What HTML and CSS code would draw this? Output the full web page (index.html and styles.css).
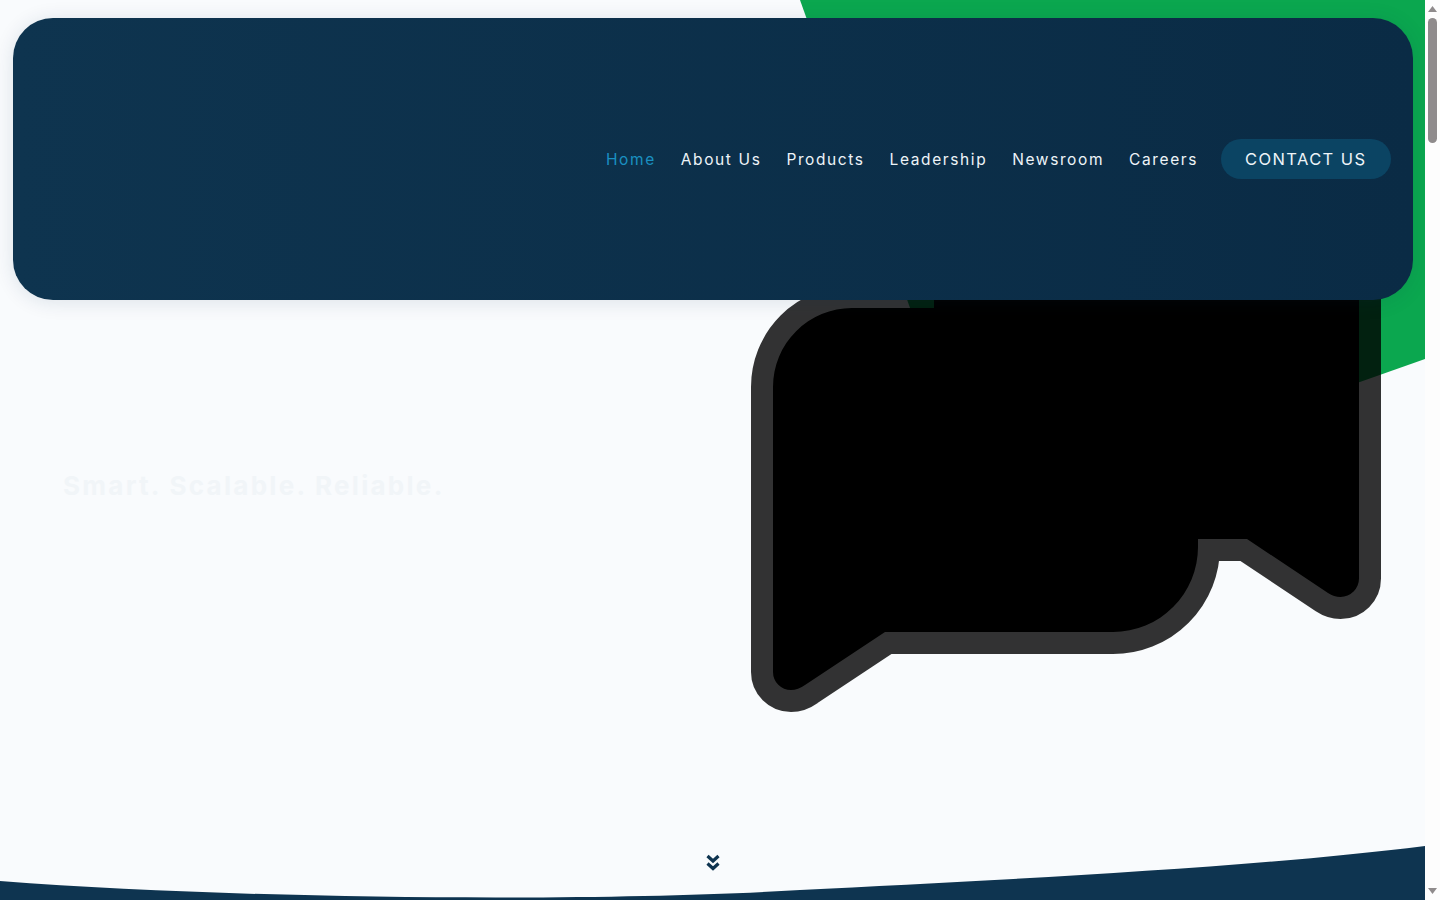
FILE: index.html
```html
<!DOCTYPE html>
<html>
<head>
	<title>Home</title>
	<meta charset="utf-8">
	<link rel="stylesheet" href="styles.css">
</head>
<body>
	<section class="hero">
		<svg class="hero_art" width="1425" height="900" viewBox="0 0 1425 900">
			<polygon class="art_green" points="800,0 1425,0 1425,359 984,515"/>
			<path class="art_bubble" d="M852 308 H1359 V578.5 A18.5 18.5 0 0 1 1340.5 597 Q1334 597 1328 593 L1247 539 H1198 V547 A85 85 0 0 1 1113 632 H885 L805 685 Q798 690 791 690 A18 18 0 0 1 773 672 V387 A79 79 0 0 1 852 308 Z"/>
			<rect x="934" y="286" width="425" height="22"/>
			<path class="art_curve" d="M0 881 C250 900 600 902 800 890 C1000 880 1250 868 1425 846 V900 H0 Z"/>
		</svg>

		<div class="topbar">
			<nav class="menu">
				<a class="menu_item menu_active" href="#">Home</a>
				<a class="menu_item" href="#">About Us</a>
				<a class="menu_item" href="#">Products</a>
				<a class="menu_item" href="#">Leadership</a>
				<a class="menu_item" href="#">Newsroom</a>
				<a class="menu_item" href="#">Careers</a>
			</nav>
			<a class="contact_btn" href="#">CONTACT US</a>
		</div>

		<div class="hero_text">
			<h1 class="tagline">Smart. Scalable. Reliable.</h1>
		</div>

		<div class="scroll_hint">
			<svg width="16" height="18" viewBox="0 0 16 18"><path d="M2.5 3 L8 8 L13.5 3 M2.5 10.5 L8 15.5 L13.5 10.5"/></svg>
		</div>
	</section>

	<!-- page scrollbar, the frame does not draw one itself -->
	<div class="scrollbar">
		<svg width="9" height="6" viewBox="0 0 9 6"><polygon points="4.5,0 9,6 0,6"/></svg>
		<div class="scrollbar_thumb"></div>
		<svg class="scrollbar_down" width="9" height="6" viewBox="0 0 9 6"><polygon points="0,0 9,0 4.5,6"/></svg>
	</div>
</body>
</html>
```

FILE: styles.css
```css
html, body {
	margin: 0;
	padding: 0;
	height: 900px;
	overflow: hidden;
	background-color: #F9FBFD;
}

body {
	display: flex;
	font-family: "Inter", "Liberation Sans", sans-serif;
}

.hero {
	position: relative;
	flex: 0 0 1425px;
	height: 900px;
	overflow: hidden;
	display: flex;
	flex-direction: column;
}

.hero_art {
	position: absolute;
	left: 0;
	top: 0;
}

.art_green {
	fill: #0BA74F;
}

.art_bubble {
	fill: #000000;
	stroke: #000000;
	stroke-opacity: 0.8;
	stroke-width: 44;
	stroke-miterlimit: 10;
}

.art_curve {
	fill: #0E3450;
}

.topbar {
	position: relative;
	box-sizing: border-box;
	width: 1400px;
	height: 282px;
	margin: 18px 0 0 13px;
	padding-right: 22px;
	border-radius: 40px;
	background: linear-gradient(90deg, #0E344F, #0A2B45);
	box-shadow: 0 2px 20px rgba(14, 52, 80, 0.12);
	display: flex;
	align-items: center;
	justify-content: flex-end;
}

.menu {
	display: flex;
	gap: 25px;
	margin-right: 23px;
}

.menu_item {
	color: #EEF4F8;
	font-size: 15.5px;
	letter-spacing: 1.6px;
	text-decoration: none;
}

.menu_active {
	color: #1A90C2;
}

.contact_btn {
	box-sizing: border-box;
	width: 170px;
	height: 40px;
	padding-left: 24px;
	line-height: 40px;
	white-space: nowrap;
	border-radius: 20px;
	background-color: #0B4463;
	color: #EEF4F8;
	font-size: 16.5px;
	letter-spacing: 1.4px;
	text-decoration: none;
}

.hero_text {
	position: relative;
	padding: 166px 0 0 63px;
}

.tagline {
	margin: 0;
	color: #F1F5F8;
	font-size: 26px;
	line-height: 40px;
	font-weight: 700;
	letter-spacing: 2.28px;
}

.scroll_hint {
	position: absolute;
	left: 705px;
	top: 853px;
}

.scroll_hint path {
	fill: none;
	stroke: #0E3450;
	stroke-width: 3.2;
}

.scrollbar {
	box-sizing: border-box;
	flex: 0 0 15px;
	height: 900px;
	padding: 6px 3px;
	background-color: #FDFDFD;
	display: flex;
	flex-direction: column;
	align-items: center;
}

.scrollbar svg {
	flex: none;
	fill: #8F8B8C;
}

.scrollbar_thumb {
	width: 9px;
	height: 125px;
	margin-top: 6px;
	border-radius: 5px;
	background-color: #8F8B8C;
}

.scrollbar_down {
	margin-top: auto;
}
```
